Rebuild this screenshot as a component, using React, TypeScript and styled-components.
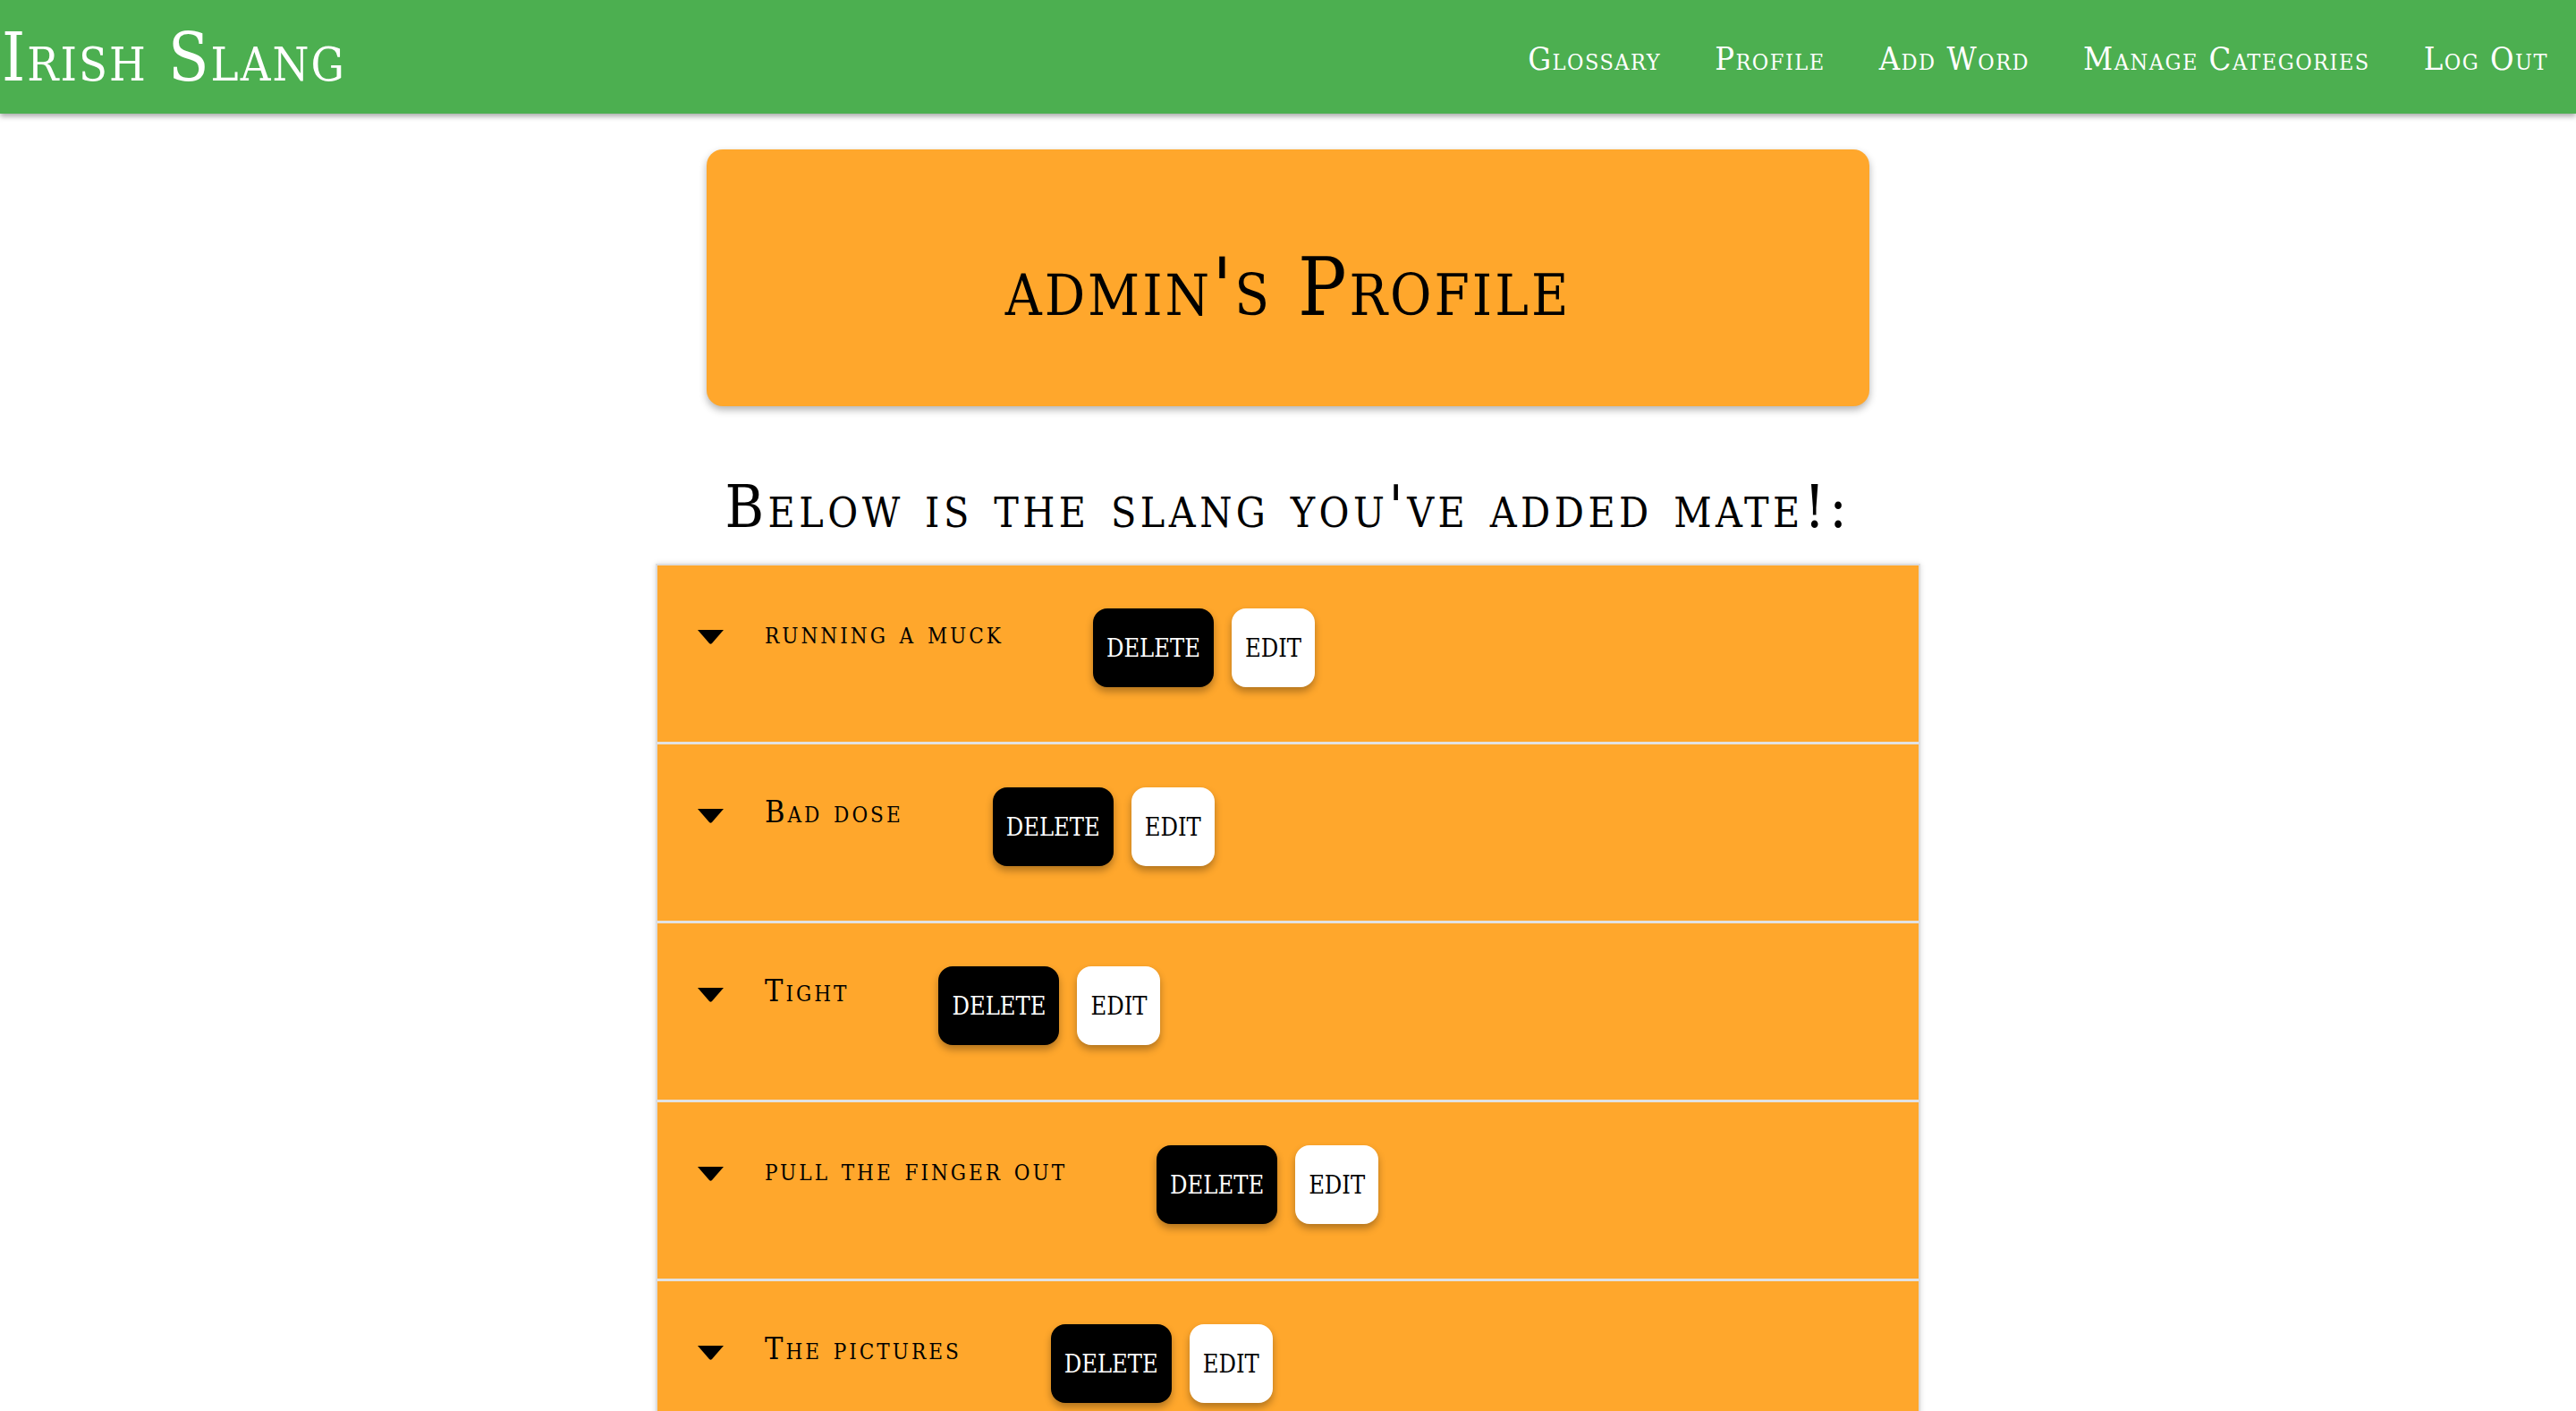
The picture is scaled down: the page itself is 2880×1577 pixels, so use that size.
import React from "react";
import styled, { createGlobalStyle } from "styled-components";

const Global = createGlobalStyle`
  html { scrollbar-width: none; }
  ::-webkit-scrollbar { display: none; }
  body {
    margin: 0;
    background: #ffffff;
    font-family: "DejaVu Serif Condensed", "DejaVu Serif", serif;
    color: #000;
  }
`;

const Header = styled.header`
  display: flex;
  align-items: center;
  justify-content: space-between;
  height: 127px;
  background: #4caf50;
  box-shadow: 0 3px 6px rgba(0, 0, 0, 0.35);
  position: relative;
  z-index: 2;
`;

const Logo = styled.div`
  font-variant: small-caps;
  font-size: 74px;
  color: #fff;
  padding-left: 2px;
  letter-spacing: 2px;
`;

const Nav = styled.nav`
  display: flex;
  gap: 60px;
  padding-right: 31px;
  padding-top: 4px;
`;

const NavLink = styled.a`
  font-variant: small-caps;
  font-size: 36px;
  color: #fff;
  text-decoration: none;
  letter-spacing: 1.5px;
`;

const Main = styled.main`
  display: flex;
  flex-direction: column;
  align-items: center;
`;

const ProfileCard = styled.section`
  width: 1300px;
  height: 287px;
  margin-top: 40px;
  background: #ffa72c;
  border-radius: 18px;
  box-shadow: 0 4px 8px rgba(0, 0, 0, 0.3);
  display: flex;
  align-items: center;
  justify-content: center;
`;

const ProfileTitle = styled.h1`
  margin: 0;
  padding-top: 20px;
  font-weight: normal;
  font-variant: small-caps;
  font-size: 90px;
  letter-spacing: 3px;
`;

const SectionHeading = styled.h2`
  margin: 80px 0 30px;
  font-weight: normal;
  font-variant: small-caps;
  font-size: 66px;
  letter-spacing: 4.5px;
  line-height: 1;
`;

const List = styled.div`
  width: 1410px;
  border: 2px solid #dddddd;
  box-shadow: 0 0 6px rgba(0, 0, 0, 0.15);
`;

const Row = styled.details`
  background: #ffa72c;
  border-bottom: 3px solid #e2e2e2;
  height: 200px;
  box-sizing: border-box;
`;

const Summary = styled.summary`
  list-style: none;
  display: flex;
  align-items: flex-start;
  padding: 48px 0 0 45px;
  cursor: pointer;
  &::-webkit-details-marker { display: none; }
`;

const Marker = styled.svg`
  width: 29px;
  height: 16px;
  margin-top: 24px;
  flex-shrink: 0;
`;

const Term = styled.h3`
  margin: 10px 0 0 46px;
  font-weight: normal;
  font-variant: small-caps;
  font-size: 34px;
  letter-spacing: 3px;
  line-height: 1;
`;

const Buttons = styled.div`
  display: flex;
  gap: 20px;
  margin-left: 100px;
`;

const Button = styled.button<{ $dark?: boolean }>`
  height: 88px;
  padding: 0 15px;
  border: none;
  border-radius: 16px;
  font-family: "DejaVu Serif Condensed", "DejaVu Serif", serif;
  font-size: 27px;
  background: ${(p) => (p.$dark ? "#000" : "#fff")};
  color: ${(p) => (p.$dark ? "#fff" : "#000")};
  box-shadow: 0 5px 8px rgba(0, 0, 0, 0.3);
  cursor: pointer;
`;

const terms = ["running a muck", "Bad dose", "Tight", "pull the finger out", "The pictures"];

export default function App() {
  return (
    <>
      <Global />
      <Header>
        <Logo>Irish Slang</Logo>
        <Nav>
          <NavLink href="#">Glossary</NavLink>
          <NavLink href="#">Profile</NavLink>
          <NavLink href="#">Add Word</NavLink>
          <NavLink href="#">Manage Categories</NavLink>
          <NavLink href="#">Log Out</NavLink>
        </Nav>
      </Header>
      <Main>
        <ProfileCard>
          <ProfileTitle>admin's Profile</ProfileTitle>
        </ProfileCard>
        <SectionHeading>Below is the slang you've added mate!:</SectionHeading>
        <List>
          {terms.map((t) => (
            <Row key={t}>
              <Summary>
                <Marker viewBox="0 0 29 16">
                  <path d="M0 0 H29 L16 15 Q14.5 16.5 13 15 Z" fill="#000" />
                </Marker>
                <Term>{t}</Term>
                <Buttons>
                  <Button $dark>DELETE</Button>
                  <Button>EDIT</Button>
                </Buttons>
              </Summary>
            </Row>
          ))}
        </List>
      </Main>
    </>
  );
}
